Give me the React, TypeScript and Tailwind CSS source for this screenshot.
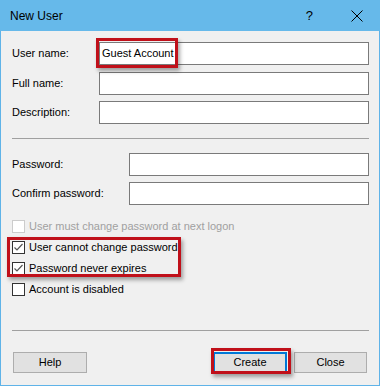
import React from "react";

const font = { fontFamily: '"Liberation Sans", Arial, sans-serif' };

function Check({ checked, disabled }: { checked?: boolean; disabled?: boolean }) {
  return (
    <svg width="13" height="13" viewBox="0 0 13 13" className="shrink-0">
      <rect x="0.5" y="0.5" width="12" height="12" fill="#ffffff" stroke={disabled ? "#cccccc" : "#333333"} />
      {checked && <polyline points="2.5,6.5 5,9 10.5,3" fill="none" stroke="#555555" strokeWidth="1.2" />}
    </svg>
  );
}

function Row({ label, labelW, children, className = "" }: { label: string; labelW: string; children?: React.ReactNode; className?: string }) {
  return (
    <div className={`flex items-center ${className}`}>
      <div className={`${labelW} text-[11px] text-black`}>{label}</div>
      <div className="flex-1 h-[23px] bg-white border border-[#7a7a7a] flex items-center px-[2px] text-[11px] text-black">
        {children}
      </div>
    </div>
  );
}

function CheckRow({ label, checked, disabled, className = "" }: { label: string; checked?: boolean; disabled?: boolean; className?: string }) {
  return (
    <div className={`flex items-center h-[13px] gap-[4px] ${className}`}>
      <Check checked={checked} disabled={disabled} />
      <span className={`text-[11px] leading-none ${disabled ? "text-[#a0a0a0]" : "text-black"}`}>{label}</span>
    </div>
  );
}

export default function App() {
  return (
    <div className="relative w-[380px] h-[386px] bg-[#f0f0f0] border-x border-b border-[#5fb3e8] flex flex-col" style={font}>
      <div className="h-[31px] bg-[#66b9ea] flex items-center -mx-px">
        <span className="ml-[10px] text-[12px] text-black">New User</span>
        <span className="ml-auto text-[13px] text-black mr-[38px]">?</span>
        <svg width="12" height="12" viewBox="0 0 12 12" className="mr-[17px]">
          <path d="M0.5 0.5 L11.5 11.5 M11.5 0.5 L0.5 11.5" stroke="#000" strokeWidth="1" />
        </svg>
      </div>
      <div className="flex flex-col pl-[11px] pr-[10px] pt-[11px]">
        <Row label="User name:" labelW="w-[87px]">Guest Account</Row>
        <Row label="Full name:" labelW="w-[87px]" className="mt-[7px]" />
        <Row label="Description:" labelW="w-[87px]" className="mt-[6px]" />
        <div className="h-px bg-[#a0a0a0] mt-[14px]" />
        <Row label="Password:" labelW="w-[117px]" className="mt-[14px]" />
        <Row label="Confirm password:" labelW="w-[117px]" className="mt-[6px]" />
        <CheckRow label="User must change password at next logon" disabled className="mt-[15px]" />
        <CheckRow label="User cannot change password" checked className="mt-[8px]" />
        <CheckRow label="Password never expires" checked className="mt-[8px]" />
        <CheckRow label="Account is disabled" className="mt-[8px]" />
        <div className="h-px bg-[#a0a0a0] mt-[34px]" />
        <div className="flex items-center mt-[21px] pl-px pr-[2px]">
          <button className="w-[74px] h-[21px] bg-[#e1e1e1] border border-[#adadad] text-[11px] text-black">Help</button>
          <button className="ml-auto w-[74px] h-[21px] bg-[#e1e1e1] border-2 border-[#0078d7] text-[11px] text-black">Create</button>
          <button className="ml-[7px] w-[73px] h-[21px] bg-[#e1e1e1] border border-[#adadad] text-[11px] text-black">Close</button>
        </div>
      </div>
      <div className="absolute left-[95px] top-[38px] w-[82px] h-[30px] border-[3px] border-[#c0101a] shadow-[2px_3px_4px_rgba(0,0,0,0.35)]" />
      <div className="absolute left-[6px] top-[237px] w-[174px] h-[40px] border-[3px] border-[#c0101a] shadow-[2px_3px_4px_rgba(0,0,0,0.35)]" />
      <div className="absolute left-[210px] top-[348px] w-[80px] h-[26px] border-[3px] border-[#c0101a] shadow-[2px_3px_4px_rgba(0,0,0,0.35)]" />
    </div>
  );
}
